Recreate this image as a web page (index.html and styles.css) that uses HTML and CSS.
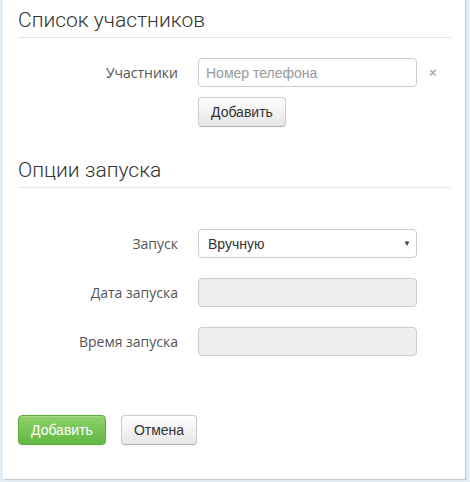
FILE: index.html
```html
<!DOCTYPE html>
<html lang="ru">
<head>
<meta charset="utf-8">
<link rel="stylesheet" href="styles.css">
</head>
<body>
<div class="panel">
  <section class="section">
    <h2 class="legend">Список участников</h2>
    <div class="row">
      <label class="label">Участники</label>
      <div class="control">
        <div class="input-line">
          <input class="input" type="text" placeholder="Номер телефона">
          <span class="remove">×</span>
        </div>
        <button class="btn">Добавить</button>
      </div>
    </div>
  </section>
  <section class="section section-2">
    <h2 class="legend">Опции запуска</h2>
    <div class="rows">
      <div class="row">
        <label class="label">Запуск</label>
        <div class="control">
          <div class="select"><span>Вручную</span><span class="caret">▼</span></div>
        </div>
      </div>
      <div class="row">
        <label class="label">Дата запуска</label>
        <div class="control"><div class="input disabled"></div></div>
      </div>
      <div class="row">
        <label class="label">Время запуска</label>
        <div class="control"><div class="input disabled"></div></div>
      </div>
    </div>
  </section>
  <div class="actions">
    <button class="btn btn-success">Добавить</button>
    <button class="btn">Отмена</button>
  </div>
</div>
</body>
</html>
```

FILE: styles.css
```css
html, body {
  margin: 0;
  padding: 0;
}
body {
  background: #e4edf3;
  width: 470px;
  height: 482px;
  overflow: hidden;
}
.panel {
  box-sizing: border-box;
  margin-left: 3px;
  width: 462px;
  height: 479px;
  background: #fff;
  box-shadow: 1px 1px 1px rgba(0,0,0,0.15);
  padding: 0 14px 0 15px;
  font-family: "Open Sans", sans-serif;
}
.section {
  padding-top: 4px;
}
.legend {
  margin: 0;
  font-family: Roboto, "Open Sans", sans-serif;
  font-weight: 300;
  font-size: 21px;
  line-height: 32px;
  color: #333;
  border-bottom: 1px solid #e5e5e5;
  padding-bottom: 1px;
}
.row {
  display: flex;
  align-items: flex-start;
  margin-top: 20px;
}
.label {
  width: 160px;
  text-align: right;
  font-size: 14px;
  color: #555;
  line-height: 29px;
  margin-right: 20px;
}
.control {
  display: flex;
  flex-direction: column;
  align-items: flex-start;
}
.input-line {
  display: flex;
  align-items: center;
}
.input {
  box-sizing: border-box;
  width: 219px;
  height: 29px;
  border: 1px solid #ccc;
  border-radius: 4px;
  padding: 0 7px;
  font-family: "Liberation Sans", Arial, sans-serif;
  font-size: 14px;
  color: #555;
  background: #fff;
  outline: none;
}
.input::placeholder {
  color: #999;
}
.input.disabled {
  background: #eee;
}
.remove {
  margin-left: 12px;
  font-family: "Liberation Sans", Arial, sans-serif;
  font-weight: bold;
  font-size: 13px;
  color: #aaa;
}
.btn {
  box-sizing: border-box;
  height: 30px;
  padding: 0 12px;
  border: 1px solid #ccc;
  border-bottom-color: #b3b3b3;
  border-radius: 4px;
  background: linear-gradient(#fff, #e6e6e6);
  font-family: "Liberation Sans", Arial, sans-serif;
  font-size: 14px;
  color: #333;
  box-shadow: inset 0 1px 0 rgba(255,255,255,.2), 0 1px 2px rgba(0,0,0,.05);
}
.control .btn {
  margin-top: 10px;
}
.select {
  box-sizing: border-box;
  width: 219px;
  height: 29px;
  border: 1px solid #ccc;
  border-radius: 4px;
  display: flex;
  align-items: center;
  justify-content: space-between;
  padding: 0 5px 0 9px;
  font-family: "Liberation Sans", Arial, sans-serif;
  font-size: 14px;
  color: #333;
}
.caret {
  font-size: 8px;
  color: #444;
}
.section-2 {
  padding-top: 27px;
}
.section-2 .rows {
  padding-top: 41px;
}
.section-2 .row:first-child {
  margin-top: 0;
}
.actions {
  display: flex;
  gap: 15px;
  margin-top: 59px;
}
.btn-success {
  color: #fff;
  background: linear-gradient(#8fd16b, #62b741);
  border: 1px solid #5cb03a;
  padding: 0 12px;
}
```
